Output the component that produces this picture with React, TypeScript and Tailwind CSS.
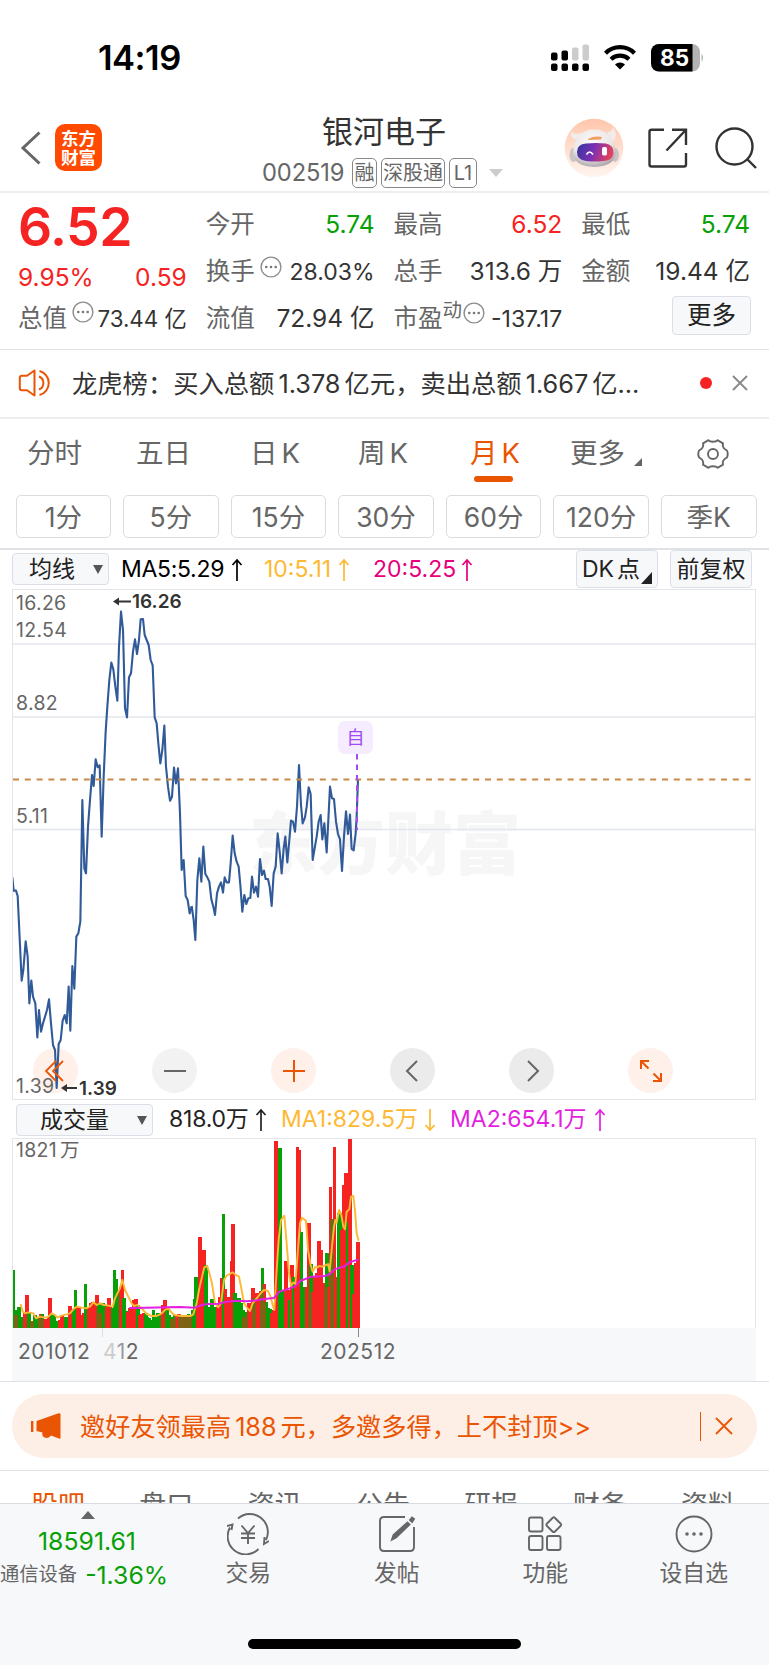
import type { ReactNode } from 'react';

// price line, two runs of [x, y] in thirds of a pixel
const PRICE_HISTORY =
  '37,892 41,932 48,932 53,948 65,1202 70,1170 77,1084 83,1130 88,1270 94,1202 99,1250 106,1270 112,1372 117,1290 123,1355 129,1330 141,1290 147,1258 153,1330 159,1395 165,1410 170,1524 176,1392 182,1380 188,1322 194,1305 200,1330 206,1220 211,1352 217,1158 223,1226 229,1070 235,1060 241,1025 247,660 253,865 258,880 264,740 270,660 276,585 281,618 287,538 293,562 299,556 305,770 311,590 317,455 322,380 328,300 334,248 340,268 346,320 352,362 357,200 363,95 369,150 375,385 381,412 387,292 393,280 399,215 405,178 411,222 417,180 422,118 429,117 434,165 440,180 446,195 452,240 458,256 464,412 470,430 475,490 481,550 487,510 493,437 498,560 504,620 510,662 516,650 522,563 528,610 534,565 540,700 545,870 551,840 557,948 563,960 569,1000 575,980';
const PRICE_RECENT =
  '5,648 11,690 16,750 22,570 28,505 34,575 40,470 46,552 52,562 58,575 64,628 70,650 75,675 81,610 87,590 93,577 99,608 104,562 110,577 117,577 122,520 128,437 134,490 140,515 146,530 151,585 157,665 163,615 169,642 175,625 181,624 186,560 192,608 198,590 204,620 210,507 216,555 222,542 227,567 234,567 239,590 245,648 251,550 257,530 263,430 269,485 275,550 281,475 286,440 292,517 298,450 303,392 309,395 315,425 321,350 327,225 333,345 338,400 345,382 350,350 356,292 362,312 368,510 374,475 380,440 386,395 392,375 397,448 403,400 410,487 415,390 420,290 426,325 432,327 438,395 444,432 450,448 456,543 462,440 468,364 474,432 480,374 485,477 491,481 497,430 500,380 504,270';

// one entry per month: colour + top of the bar
const VOLUME =
  'G420 G540 R556 G530 G562 G562 R550 R496 G548 G572 R572 G555 G560 G565 R552 G552 R566 R568 R565 R505 G555 G556 G572 G575 R570 R556 R560 G560 G562 R527 R537 G537 G480 R530 R532 R555 R550 G461 G540 R530 R520 R515 R525 R496 G520 R550 G520 G525 R530 R503 R530 G535 G420 G447 G485 R470 R419 G503 G542 R545 R533 R540 R511 R507 G525 R555 R552 R548 G550 G560 G565 G570 G540 G560 G550 G550 G548 R525 R510 G540 G555 G560 R568 G556 R558 R552 G560 R556 G556 R560 G552 R556 G540 G508 G441 R525 R321 R400 R360 G405 G530 G530 G506 G530 G550 R530 R500 R443 G253 R478 R500 R500 R393 R281 G488 G505 G505 G520 G540 R560 G545 R520 R530 R473 G505 R490 R490 R484 G415 R462 G516 G535 G536 R550 R540 R33 R440 G55 G480 G485 R393 R480 G511 R405 G440 R465 R52 R60 G306 G470 G488 R470 R278 G403 R485 R440 R430 R333 R360 R470 R458 G368 R470 R171 G267 R52 R440 G250 G250 R300 R165 R128 G276 R25 G405 R492 R400 R336';
const VOLUME_MA1 =
  '62,522 68,545 75,550 85,547 100,550 108,565 120,560 135,563 145,560 155,550 165,555 172,563 185,557 200,553 210,550 220,538 230,530 245,533 258,535 270,530 280,517 290,525 300,520 312,525 325,527 338,530 345,505 352,490 360,475 367,450 375,480 385,500 395,520 402,528 412,525 425,535 440,552 455,558 470,558 485,550 495,540 505,535 515,548 525,556 545,558 572,558 580,553 590,520 597,480 605,445 613,412 622,408 628,430 636,460 645,520 655,532 663,520 672,450 680,437 690,432 697,427 705,433 717,440 725,480 732,520 740,532 750,543 758,520 770,505 782,490 792,480 803,482 812,500 818,525 823,540 828,450 836,330 843,270 853,257 860,340 867,430 873,468 879,458 886,462 893,370 900,280 906,263 918,272 924,360 932,405 938,425 946,410 952,412 958,408 966,410 978,405 984,402 989,425 996,350 1002,290 1006,270 1010,278 1017,240 1024,255 1030,290 1035,298 1040,245 1048,238 1053,200 1060,198 1065,240 1070,310 1076,332';
const VOLUME_MA2 =
  '388,534 440,533 500,532 540,531 585,533 605,525 625,522 655,521 680,515 710,512 740,514 770,511 800,506 822,504 838,485 860,478 885,470 900,453 935,440 975,438 990,432 1003,418 1035,408 1048,397 1076,388';

const periods = ['1分', '5分', '15分', '30分', '60分', '120分', '季K'];
const infoTabs = ['股吧', '盘口', '资讯', '公告', '研报', '财务', '资料'];

function Dots({ className = '' }: { className?: string }) {
  return (
    <svg viewBox="0 0 22 22" className={`h-[22px] w-[22px] shrink-0 ${className}`} fill="none" stroke="#8e8e8e">
      <circle cx="11" cy="11" r="9.9" strokeWidth="1.4" />
      <g fill="#777" stroke="none">
        <circle cx="6.3" cy="11" r="1.3" />
        <circle cx="11" cy="11" r="1.3" />
        <circle cx="15.7" cy="11" r="1.3" />
      </g>
    </svg>
  );
}

function Stat({ label, value, color = 'text-[#333]', mark, small }: {
  label: string;
  value: string;
  color?: string;
  mark?: ReactNode;
  small?: boolean;
}) {
  return (
    <div className="flex h-[47px] items-center">
      <span className="text-[24.5px] text-[#666]">{label}</span>
      {mark}
      <span className={`ml-auto whitespace-nowrap ${small ? 'pt-[3px] text-[23px]' : 'text-[24.5px]'} ${color}`}>{value}</span>
    </div>
  );
}

function StatusBar() {
  return (
    <div className="flex h-[114px] items-center pl-[98px] pr-[64px]">
      <span className="pt-[3px] text-[34.5px] font-semibold tracking-[-0.5px] text-black">14:19</span>
      <svg viewBox="0 0 154 28" className="ml-auto mt-[2px] h-[28px] w-[154px]">
        <rect x="0" y="8.5" width="6.5" height="8" rx="2" />
        <rect x="10.5" y="6.5" width="6.5" height="10" rx="2" />
        <rect x="21" y="3.5" width="6.5" height="13" rx="2" fill="#ccc" />
        <rect x="31.5" y="0.5" width="6.5" height="16" rx="2" fill="#ccc" />
        {[0, 10.5, 21, 31.5].map((x) => (
          <rect key={x} x={x} y="19.5" width="6.5" height="7.5" rx="2" />
        ))}
        <g fill="none" stroke="#000" strokeWidth="4.2">
          <path d="M54.5 9.2 a20.5 20.5 0 0 1 29 0" />
          <path d="M60 15.2 a13 13 0 0 1 18 0" />
        </g>
        <path d="M69 25.5 l-5 -5 a7.5 7.5 0 0 1 10 0 z" />
        <clipPath id="battery">
          <rect x="100" y="0" width="49" height="27.5" rx="8" />
        </clipPath>
        <g clipPath="url(#battery)">
          <rect x="100" y="0" width="49" height="28" fill="#b3b3b3" />
          <rect x="100" y="0" width="41.5" height="28" />
        </g>
        <path d="M150.5 9.5 q3 4.3 0 8.5 z" fill="#b3b3b3" />
        <text x="123.5" y="21.8" textAnchor="middle" fill="#fff" className="text-[22.5px] font-bold">85</text>
      </svg>
    </div>
  );
}

function Robot() {
  return (
    <svg viewBox="0 0 60 60" className="h-[60px] w-[60px]">
      <defs>
        <linearGradient id="halo" x1="0" y1="0" x2="0" y2="1">
          <stop offset="0" stopColor="#ffc6ab" />
          <stop offset="1" stopColor="#fff5f0" />
        </linearGradient>
        <radialGradient id="shell" cx="0.45" cy="0.3" r="0.72">
          <stop offset="0" stopColor="#fbf9f9" />
          <stop offset="0.65" stopColor="#ebe6e7" />
          <stop offset="1" stopColor="#aaa4aa" />
        </radialGradient>
        <linearGradient id="visor" x1="0" y1="0" x2="1" y2="0.2">
          <stop offset="0" stopColor="#31359c" />
          <stop offset="0.5" stopColor="#7a2fb4" />
          <stop offset="1" stopColor="#e2435f" />
        </linearGradient>
      </defs>
      <circle cx="30" cy="30" r="29.3" fill="url(#halo)" />
      <path d="M13 22 Q5 20 7 13.500 Q10 17 18 15 Z" fill="#f3ebe9" />
      <path d="M43 14 Q49 14 48.500 9 Q55 15 49 24 Z" fill="#f3ebe9" />
      <ellipse cx="9.500" cy="37" rx="4" ry="7" fill="#c9c4c6" />
      <ellipse cx="51" cy="37" rx="4" ry="7" fill="#c9c4c6" />
      <path d="M9 34 Q11 11.500 30 11.500 Q49 11.500 51.500 34 Q52 48 30 49 Q9 48 9 34 Z" fill="url(#shell)" />
      <path d="M24 21 Q30 17.500 38 19 L37 21.500 L24 22 Z" fill="#f0a060" />
      <path d="M13 34 Q13 26 22 25.500 Q32 24.500 42 25.500 Q50 27 49.500 35 Q49 42 40 43 Q31 44 22 43 Q13 42 13 34 Z" fill="url(#visor)" />
      <path d="M22.500 36.500 q3 -5 6.500 0" fill="none" stroke="#fff" strokeWidth="1.700" />
      <rect x="38" y="29" width="5" height="8.500" rx="1.700" fill="#fff" />
    </svg>
  );
}

function Header() {
  return (
    <div className="relative flex h-[79px] items-center border-b-2 border-[#eee] pl-[20px] pr-[12px]">
      <svg viewBox="0 0 22 34" className="mt-[-8px] h-[34px] w-[22px]" fill="none" stroke="#666" strokeWidth="3">
        <path d="M19.5 1.5 L3 17 L19.5 32.5" />
      </svg>
      <div className="ml-[13px] mt-[-9px] flex h-[47px] w-[47px] flex-col items-center justify-center rounded-[10px] bg-[#ff4a00] text-[17.500px] font-bold leading-[19px] text-white">
        <span>东方</span>
        <span>财富</span>
      </div>
      <div className="absolute left-[262px] top-[1px] flex w-[245px] flex-col">
        <div className="pl-[60px] text-[31px] leading-[34px] text-[#333]">银河电子</div>
        <div className="mt-[8px] flex h-[32px] items-center text-[#666]">
          <span className="w-[90px] text-[23.700px] tracking-[-0.100px]">002519</span>
          <span className="flex h-[30px] w-[25px] items-center justify-center rounded-[5px] border border-[#888] text-[20px]">融</span>
          <span className="ml-[4px] flex h-[30px] w-[64px] items-center justify-center whitespace-nowrap rounded-[5px] border border-[#888] text-[20px]">深股通</span>
          <span className="ml-[4px] flex h-[30px] w-[28px] items-center justify-center rounded-[5px] border border-[#888] text-[20px]">L1</span>
          <svg viewBox="0 0 14 8" className="ml-[12px] h-[8px] w-[14px]" fill="#ccc">
            <path d="M0 0 H14 L7 8 Z" />
          </svg>
        </div>
      </div>
      <div className="ml-auto mt-[-9px] flex items-center">
        <Robot />
        <svg viewBox="0 0 40 40" className="ml-[24px] h-[40px] w-[40px]" fill="none" stroke="#333" strokeWidth="2.400">
          <path d="M16 1.700 H3.500 Q1.500 1.700 1.500 3.700 V36.500 Q1.500 38.500 3.500 38.500 H36 Q38 38.500 38 36.500 V25 M24 1.700 H38 V17 M38 1.700 L18.500 22.500" />
        </svg>
        <svg viewBox="0 0 42 42" className="ml-[27px] h-[42px] w-[42px]" fill="none" stroke="#333" strokeWidth="2.400">
          <circle cx="19.500" cy="19.500" r="18" />
          <path d="M32 32 L41 41" />
        </svg>
      </div>
    </div>
  );
}

function Quote() {
  return (
    <div className="grid h-[157px] grid-cols-4 gap-x-[19px] border-b border-[#e0e2e6] pl-[18px] pr-[19px] pt-[8px]">
      <div>
        <div className="h-[51px] text-[53.500px] font-semibold leading-[51px] tracking-[-0.500px] text-[#f62323]">6.52</div>
        <div className="flex h-[51px] items-center justify-between text-[24.500px] text-[#f62323]">
          <span>9.95%</span>
          <span>0.59</span>
        </div>
        <div className="flex h-[31px] items-center">
          <span className="text-[24.500px] text-[#666]">总值</span>
          <Dots className="mb-3 ml-[5px]" />
          <span className="ml-auto whitespace-nowrap pt-[2px] text-[22.300px] text-[#333]">73.44 亿</span>
        </div>
      </div>
      <div>
        <Stat label="今开" value="5.74" color="text-[#07a007]" />
        <Stat label="换手" value="28.03%" small mark={<Dots className="mb-2 ml-[5px]" />} />
        <Stat label="流值" value="72.94 亿" />
      </div>
      <div>
        <Stat label="最高" value="6.52" color="text-[#f62323]" />
        <Stat label="总手" value="313.6 万" />
        <Stat
          label="市盈"
          value="-137.17"
          small
          mark={
            <>
              <span className="mb-[15px] text-[19.500px] text-[#666]">动</span>
              <Dots className="mb-[11px] ml-[1px]" />
            </>
          }
        />
      </div>
      <div>
        <Stat label="最低" value="5.74" color="text-[#07a007]" />
        <Stat label="金额" value="19.44 亿" />
        <div className="ml-auto mr-[-1px] mt-px flex h-[39px] w-[79px] items-center justify-center rounded-[4px] border border-[#dcdfe8] bg-[#f7f8fa] text-[24.500px] text-[#222]">
          更多
        </div>
      </div>
    </div>
  );
}

function Notice() {
  return (
    <div className="flex h-[69px] items-center border-b-2 border-[#eee] pl-[18px] pr-[21px]">
      <svg viewBox="0 0 34 28" className="h-[28px] w-[34px]" fill="none" stroke="#ea5504" strokeWidth="2">
        <path d="M16.5 1.5 L9 6.8 H4 Q1.8 6.8 1.8 9 V19 Q1.8 21.2 4 21.2 H9 L16.5 26.5 Z" strokeLinejoin="round" />
        <path d="M21 7.5 a7 7 0 0 1 0 13 M21.5 2 a12.4 12.4 0 0 1 0 24" />
      </svg>
      <span className="ml-[20px] whitespace-nowrap pt-px text-[25.300px] text-[#333]">
        龙虎榜：买入总额<span className="mx-[4px]">1.378</span>亿元，卖出总额<span className="mx-[4px]">1.667</span>亿...
      </span>
      <span className="ml-auto h-[12px] w-[12px] rounded-full bg-[#f62323]" />
      <svg viewBox="0 0 16 16" className="ml-[20px] h-[16px] w-[16px]" fill="none" stroke="#888" strokeWidth="1.800">
        <path d="M1 1 L15 15 M15 1 L1 15" />
      </svg>
    </div>
  );
}

function KTabs() {
  return (
    <div className="h-[131px] border-b-2 border-[#e0e2e8] text-[27.500px] text-[#666]">
      <div className="flex h-[68px] items-center pl-[27px] pt-[2px]">
        <span className="w-[109px]">分时</span>
        <span className="w-[114px]">五日</span>
        <span className="w-[108px]">日<span className="ml-1">K</span></span>
        <span className="w-[112px]">周<span className="ml-1">K</span></span>
        <span className="relative w-[100px] text-[#ea5504]">
          月<span className="ml-1">K</span>
          <span className="absolute -bottom-[15px] left-[4px] h-[6px] w-[39px] rounded-full bg-[#ea5504]" />
        </span>
        <span>更多</span>
        <svg viewBox="0 0 8 8" className="ml-[9px] mt-[17px] h-[8px] w-[8px]" fill="#666">
          <path d="M8 0 V8 H0 Z" />
        </svg>
        <svg viewBox="0 0 32 32" className="ml-[55px] h-[32px] w-[32px]" fill="none" stroke="#666" strokeWidth="1.900">
          <path d="M11.500 2.200 C13 4.200 19 4.200 20.500 2.200 L26 5.300 C25.200 8.300 27 11 30 12.500 Q31.400 16 30 19.500 C27 21 25.200 23.700 26 26.700 L20.500 29.800 C19 27.800 13 27.800 11.500 29.800 L6 26.700 C6.800 23.700 5 21 2 19.500 Q0.600 16 2 12.500 C5 11 6.800 8.300 6 5.300 Z" strokeLinejoin="round" />
          <circle cx="16" cy="16" r="5" />
        </svg>
      </div>
      <div className="mt-[8px] flex gap-[12px] pl-[15.500px] pr-[12.500px]">
        {periods.map((p) => (
          <div key={p} className="flex h-[43px] flex-1 items-center justify-center rounded-[5px] border-[1.500px] border-[#dcdcdc] pt-[3px] text-[26.500px]">
            {p}
          </div>
        ))}
      </div>
    </div>
  );
}

function Up({ down }: { down?: boolean }) {
  return (
    <svg viewBox="0 0 12 24" className={`inline-block h-[24px] w-[12px] ${down ? 'rotate-180' : ''}`} fill="none" stroke="currentColor" strokeWidth="1.700">
      <path d="M6 23 V2 M1.500 7 L6 2 L10.500 7" />
    </svg>
  );
}

const label = 'absolute left-[3px] text-[19.500px] tracking-[0.300px] text-[#666]';
const ctl = 'flex h-[45px] w-[45px] items-center justify-center rounded-full';

function PriceChart() {
  return (
    <>
      <div className="flex h-[39px] items-center pl-[12px] pr-[17px] text-[23px]">
        <div className="flex h-[32px] w-[97px] items-center rounded-[4px] border border-[#dcdfe8] bg-[#f7f8fa] pl-[16px] pt-px text-[#222]">
          均线
          <svg viewBox="0 0 10 9" className="ml-[18px] h-[9px] w-[10px]" fill="#555">
            <path d="M0 0 H10 L5 9 Z" />
          </svg>
        </div>
        <span className="ml-[12px] flex w-[143px] items-center justify-between pr-[21px] pt-px tracking-[-0.300px] text-black">MA5:5.29<Up /></span>
        <span className="flex w-[109px] items-center justify-between pr-[23px] pt-px text-[#fdb933]">10:5.11<Up /></span>
        <span className="flex w-[100px] items-center justify-between pt-px text-[#e6007e]">20:5.25<Up /></span>
        <div className="relative ml-auto flex h-[38px] w-[82px] items-center gap-[3px] rounded-[4px] border border-[#dcdfe8] bg-[#f7f8fa] pl-[5px] pt-px text-[#222]">
          DK<span>点</span>
          <svg viewBox="0 0 11 12" className="absolute bottom-[3px] right-[5px] h-[12px] w-[11px]" fill="#222">
            <path d="M11 0 V12 H0 Z" />
          </svg>
        </div>
        <div className="ml-[12px] flex h-[38px] w-[82px] items-center justify-center whitespace-nowrap rounded-[4px] border border-[#dcdfe8] bg-[#f7f8fa] pt-px text-[23px] text-[#222]">前复权</div>
      </div>
      <div className="relative ml-[12px] h-[512px] w-[744px] border border-[#e3e5ea]">
        <div className="absolute left-[236px] top-[214px] whitespace-nowrap text-[68px] font-black leading-[80px] text-[#f6f6f6]">东方财富</div>
        <div className="absolute bottom-[6px] left-0 flex w-full gap-[74px] pl-[20px]">
          <div className={`${ctl} bg-[#fff0e9]`} />
          <div className={`${ctl} bg-[#f2f2f2]`}>
            <svg viewBox="0 0 24 24" className="h-[24px] w-[24px]" stroke="#666" strokeWidth="2"><path d="M1 12 H23" /></svg>
          </div>
          <div className={`${ctl} bg-[#fff0e9]`}>
            <svg viewBox="0 0 24 24" className="h-[24px] w-[24px]" stroke="#ea5504" strokeWidth="2"><path d="M1 12 H23 M12 1 V23" /></svg>
          </div>
          <div className={`${ctl} bg-[#ebebeb]`}>
            <svg viewBox="0 0 24 24" className="h-[24px] w-[24px]" fill="none" stroke="#666" strokeWidth="2"><path d="M16 2 L6 12 L16 22" /></svg>
          </div>
          <div className={`${ctl} bg-[#ebebeb]`}>
            <svg viewBox="0 0 24 24" className="h-[24px] w-[24px]" fill="none" stroke="#666" strokeWidth="2"><path d="M8 2 L18 12 L8 22" /></svg>
          </div>
          <div className={`${ctl} bg-[#fff0e9]`}>
            <svg viewBox="0 0 24 24" className="h-[24px] w-[24px]" fill="none" stroke="#ea5504" strokeWidth="2"><path d="M10 2 H2 V10 M2 2 L9.500 9.500 M14 22 H22 V14 M22 22 L14.500 14.500" /></svg>
          </div>
        </div>
        <svg viewBox="0 0 742 510" className="absolute left-0 top-0 h-[510px] w-[742px]" fill="none">
          <path d="M0 54 H742 M0 127 H742 M0 239.500 H742" stroke="#e3e6ee" strokeWidth="1.500" />
          <g transform="scale(0.33333) translate(-39 -30)" stroke="#305a98" strokeWidth="6.300" strokeLinejoin="round">
            <polyline points={PRICE_HISTORY} />
            <polyline points={PRICE_RECENT} transform="translate(570 330)" />
          </g>
          <path d="M43 471 L33 481 L43 491 M50 471 L40 481 L50 491" stroke="#ea5504" strokeWidth="1.800" />
          <path d="M0 189.500 H742" stroke="#c98a45" strokeWidth="1.900" strokeDasharray="6 5.800" />
          <path d="M344 164 V240" stroke="#a349f5" strokeWidth="2" strokeDasharray="5.500 5" />
          <g stroke="#333" strokeWidth="1.800">
            <path d="M104 11.500 H118 M50 498 H64" />
            <path d="M100 11.500 l6 -4 v8 z M48 498 l6 -4 v8 z" fill="#333" stroke="none" />
          </g>
        </svg>
        <div className="absolute left-[325px] top-[131px] flex h-[33px] w-[35px] items-center justify-center rounded-[7px] bg-[#f5edff] pt-[2px] text-[18px] text-[#a349f5]">自</div>
        <span className={`${label} top-[4px]`}>16.26</span>
        <span className={`${label} top-[31px]`}>12.54</span>
        <span className={`${label} top-[104px]`}>8.82</span>
        <span className={`${label} top-[217px]`}>5.11</span>
        <span className={`${label} bottom-[3px]`}>1.39</span>
        <span className="absolute left-[119px] top-[2px] text-[19px] font-semibold text-[#333]">16.26</span>
        <span className="absolute bottom-[1px] left-[66px] text-[19px] font-semibold text-[#333]">1.39</span>
      </div>
    </>
  );
}

function VolumeChart() {
  return (
    <>
      <div className="flex h-[38px] items-center pl-[16px] text-[23px]">
        <div className="mt-px flex h-[32px] w-[137px] items-center rounded-[4px] border border-[#dcdfe8] bg-[#f7f8fa] pl-[23px] pt-px text-[#222]">
          成交量
          <svg viewBox="0 0 10 9" className="ml-[28px] h-[9px] w-[10px] shrink-0" fill="#555">
            <path d="M0 0 H10 L5 9 Z" />
          </svg>
        </div>
        <span className="ml-[16px] flex w-[112px] items-center justify-between pr-[14px] pt-px tracking-[-0.200px] text-[#222]">818.0万<Up /></span>
        <span className="flex w-[169px] items-center justify-between pr-[14px] pt-px text-[#fdb933]">MA1:829.5万<Up down /></span>
        <span className="flex w-[156px] items-center justify-between pt-px text-[#e41fe0]">MA2:654.1万<Up /></span>
      </div>
      <div className="relative ml-[12px] h-[190px] w-[744px] border border-b-0 border-[#e3e5ea]">
        <svg viewBox="0 0 742 189" className="h-[189px] w-[742px]" fill="none">
          <g transform="scale(0.33333) translate(-39 -27)">
            {VOLUME.split(' ').map((bar, i) => {
              const top = Number(bar.slice(1));
              return (
                <rect
                  key={i}
                  x={34.5 + i * 5.84}
                  y={top}
                  width={11}
                  height={594 - top}
                  fill={bar[0] === 'R' ? '#f62323' : '#07a007'}
                  shapeRendering="crispEdges"
                />
              );
            })}
            <polyline points={VOLUME_MA1} stroke="#fdb933" strokeWidth="5.800" strokeLinejoin="round" />
            <polyline points={VOLUME_MA2} stroke="#e41fe0" strokeWidth="6" strokeLinejoin="round" />
          </g>
        </svg>
        <span className={`${label} top-[2px]`}>1821<span className="ml-[3px]">万</span></span>
      </div>
      <div className="relative ml-[12px] h-[53px] w-[744px] bg-[#f7f8fa] text-[21px] tracking-[0.500px] text-[#666]">
        <span className="absolute left-[90px] top-0 h-[9px] w-px bg-[#ddd]" />
        <span className="absolute left-[346px] top-0 h-[9px] w-px bg-[#888]" />
        <div className="flex h-[47px] items-center pl-[6px]">
          <span className="w-[85px]">201012</span>
          <span className="w-[217px] text-[#999]"><span className="text-[#ccc]">4</span>1<span className="text-[#666]">2</span></span>
          <span>202512</span>
        </div>
      </div>
    </>
  );
}

function Banner() {
  return (
    <div className="border-y-[1.500px] border-[#e0e2e8] px-[12px] py-[12px]">
      <div className="flex h-[64px] items-center rounded-full bg-[#fdeee6] pl-[19px] pr-[24px] text-[#ea5504]">
        <svg viewBox="0 0 30 26" className="h-[26px] w-[30px]" fill="currentColor">
          <rect x="0" y="8" width="2.400" height="11" />
          <path d="M5.500 8 L24 1.500 Q29.500 -0.500 29.500 1 V25 Q29.500 26 28 25.500 L20 22.500 Q17.500 26 13.500 24.500 Q10.500 23 11.500 19.500 L5.500 18 Z" />
        </svg>
        <span className="ml-[19px] whitespace-nowrap pt-[2px] text-[25.200px]">
          邀好友领最高<span className="mx-[4px]">188</span>元，多邀多得，上不封顶&gt;&gt;
        </span>
        <span className="ml-auto h-[29px] w-[1.500px] bg-[#ea5504]" />
        <svg viewBox="0 0 18 18" className="ml-[14px] h-[18px] w-[18px]" fill="none" stroke="currentColor" strokeWidth="1.800">
          <path d="M1 1 L17 17 M17 1 L1 17" />
        </svg>
      </div>
    </div>
  );
}

function NavItem({ label, children }: { label: string; children: ReactNode }) {
  return (
    <div className="flex w-[148.500px] flex-col items-center pt-[9px]">
      <svg viewBox="0 0 42 42" className="h-[42px] w-[42px]" fill="none" stroke="#666" strokeWidth="1.900">
        {children}
      </svg>
      <span className="mt-[6px] text-[22.800px] leading-[24px] text-[#666]">{label}</span>
    </div>
  );
}

function BottomBar() {
  return (
    <div className="relative flex h-[162px] border-t-[1.500px] border-[#d8dbe0] bg-[#f7f8fa]">
      <div className="flex w-[174px] flex-col">
        <svg viewBox="0 0 14 8" className="ml-[81px] mt-[7px] h-[8px] w-[14px] shrink-0" fill="#666">
          <path d="M0 8 H14 L7 0 Z" />
        </svg>
        <span className="mt-[8px] text-center text-[24.800px] leading-[28px] text-[#07a007]">18591.61</span>
        <div className="mt-[7px] flex h-[26px] items-center whitespace-nowrap">
          <span className="text-[19.300px] text-[#666]">通信设备</span>
          <span className="ml-[8px] text-[24.800px] text-[#07a007]">-1.36%</span>
        </div>
      </div>
      <NavItem label="交易">
        <path d="M11 5.500 A18 18 0 0 1 39 27 M31.500 36 A18 18 0 0 1 3 14.500 M0 13 L5.500 11.500 L4.500 17 M42 28 L37 31 L37.500 24" />
        <path d="M14.500 12.500 L21 20 L27.500 12.500 M21 20 V31 M14 20.500 H28 M14 25 H28" />
      </NavItem>
      <NavItem label="发帖">
        <path d="M29 4 H8 Q4 4 4 8 V34 Q4 38 8 38 H34 Q38 38 38 34 V14" />
        <path d="M16 26.500 L17.500 22 L31.500 9.500 L33.500 11.500 L20 24.500 Z M34 7 L36 4.500 L38 6 L36 9 Z" fill="#666" />
      </NavItem>
      <NavItem label="功能">
        <rect x="5" y="4.500" width="13.500" height="14" rx="2" />
        <rect x="5" y="23" width="13.500" height="14" rx="2" />
        <rect x="23" y="23" width="13.500" height="14" rx="2" />
        <path d="M28.500 5 Q29.800 3.500 31 5 L36.500 10.500 Q37.800 11.800 36.500 13 L31 18.500 Q29.800 19.800 28.500 18.500 L23 13 Q21.800 11.800 23 10.500 Z" />
      </NavItem>
      <NavItem label="设自选">
        <circle cx="21" cy="21" r="17.500" />
        <g fill="#666" stroke="none">
          <circle cx="14" cy="21" r="1.800" />
          <circle cx="21" cy="21" r="1.800" />
          <circle cx="28" cy="21" r="1.800" />
        </g>
      </NavItem>
      <div className="absolute bottom-[16px] left-[248px] h-[10px] w-[273px] rounded-full bg-black" />
    </div>
  );
}

export default function App() {
  return (
    <div className="flex h-[1665px] w-[769px] flex-col overflow-hidden bg-white font-['Inter','Noto_Sans_CJK_SC',sans-serif] leading-none">
      <StatusBar />
      <Header />
      <Quote />
      <Notice />
      <KTabs />
      <PriceChart />
      <VolumeChart />
      <Banner />
      <div className="flex h-[32px] shrink-0 justify-between overflow-hidden pl-[31px] pr-[34px] pt-[20px] text-[27px] leading-[30px] text-[#666]">
        {infoTabs.map((tab, i) => (
          <span key={tab} className={i === 0 ? 'text-[#ea5504]' : ''}>{tab}</span>
        ))}
      </div>
      <BottomBar />
    </div>
  );
}
